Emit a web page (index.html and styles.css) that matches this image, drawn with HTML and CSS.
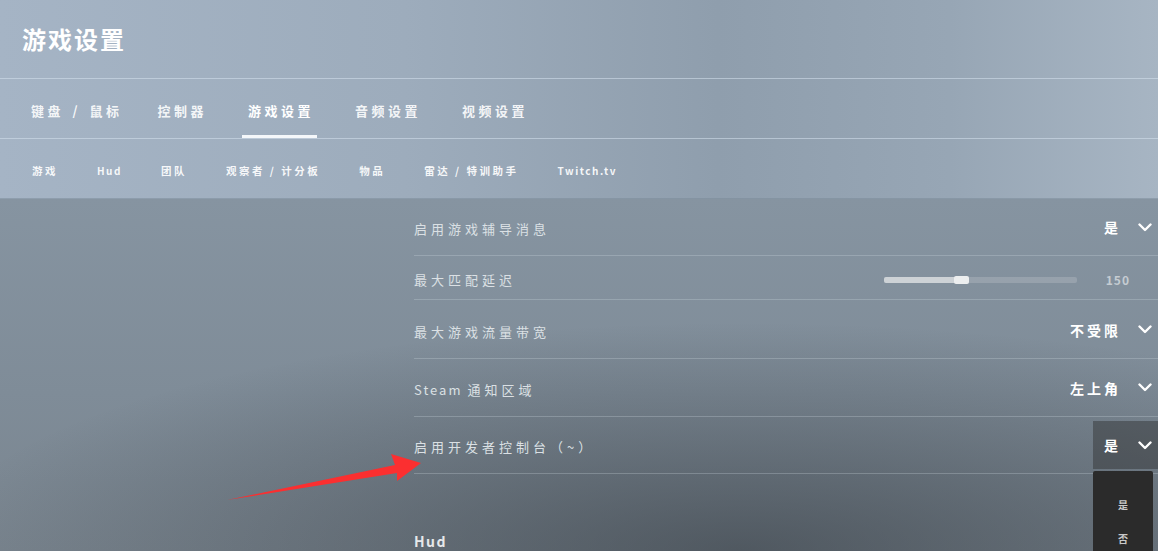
FILE: index.html
```html
<!DOCTYPE html>
<html lang="zh-CN">
<head>
    <meta charset="UTF-8">
    <meta name="viewport" content="width=device-width, initial-scale=1.0">
    <title>游戏设置</title>
    <link rel="stylesheet" href="styles.css">
</head>
<body>

<div class="screen">
    <header class="title-bar">
        <h1>游戏设置</h1>
    </header>

    <nav class="tabs">
        <a class="tab tab-wide">键盘 / 鼠标</a>
        <a class="tab">控制器</a>
        <a class="tab active">游戏设置</a>
        <a class="tab">音频设置</a>
        <a class="tab">视频设置</a>
    </nav>

    <nav class="subtabs">
        <a class="subtab">游戏</a>
        <a class="subtab latin">Hud</a>
        <a class="subtab">团队</a>
        <a class="subtab">观察者 / 计分板</a>
        <a class="subtab">物品</a>
        <a class="subtab">雷达 / 特训助手</a>
        <a class="subtab latin">Twitch.tv</a>
    </nav>

    <main class="content">
        <aside class="side"></aside>

        <section class="settings">
            <div class="row row-1">
                <span class="label">启用游戏辅导消息</span>
                <div class="select">
                    <span class="value">是</span>
                    <svg class="chevron" viewBox="0 0 14 9"><path d="M1.5 1.5 L7 7 L12.5 1.5"/></svg>
                </div>
            </div>

            <div class="row row-2">
                <span class="label">最大匹配延迟</span>
                <div class="slider">
                    <div class="track">
                        <div class="fill" style="width: 38%"></div>
                        <div class="handle"></div>
                    </div>
                    <span class="number">150</span>
                </div>
            </div>

            <div class="row row-3">
                <span class="label">最大游戏流量带宽</span>
                <div class="select">
                    <span class="value">不受限</span>
                    <svg class="chevron" viewBox="0 0 14 9"><path d="M1.5 1.5 L7 7 L12.5 1.5"/></svg>
                </div>
            </div>

            <div class="row row-4">
                <span class="label"><span class="latin">Steam </span>通知区域</span>
                <div class="select">
                    <span class="value">左上角</span>
                    <svg class="chevron" viewBox="0 0 14 9"><path d="M1.5 1.5 L7 7 L12.5 1.5"/></svg>
                </div>
            </div>

            <div class="row row-5">
                <span class="label">启用开发者控制台（~）</span>
                <div class="select open">
                    <span class="value">是</span>
                    <svg class="chevron" viewBox="0 0 14 9"><path d="M1.5 1.5 L7 7 L12.5 1.5"/></svg>
                    <ul class="menu">
                        <li>是</li>
                        <li>否</li>
                    </ul>
                </div>
            </div>

            <h2 class="section-title">Hud</h2>
        </section>

        <!-- annotation arrow pointing at the console option -->
        <svg class="arrow" viewBox="0 0 200 52">
            <path d="M1 50 L169 15 L165 4 L195 13 L171 31 L171 23 Z"/>
        </svg>
    </main>
</div>

</body>
</html>
```

FILE: styles.css
```css
:root {
    --text-color: #ffffff;
    --label-color: #dbe0e4;
    --line-light: rgba(214, 226, 238, 0.55);
    --line-dark: rgba(210, 220, 228, 0.28);
    --arrow-color: #fb2f30;
}
body {
    margin: 0;
    padding: 0;
    font-family: 'Noto Sans CJK SC', 'Noto Sans', sans-serif;
    color: var(--text-color);
    background-color: #7d8a97;
}
.screen {
    width: 1158px;
    height: 551px;
    overflow: hidden;
    display: flex;
    flex-direction: column;
    background: linear-gradient(90deg, #a5b4c5 0%, #9dacbc 35%, #8f9ead 62%, #97a6b5 82%, #a7b5c3 100%);
}
.title-bar {
    height: 78px;
    flex-shrink: 0;
    border-bottom: 1px solid var(--line-light);
    display: flex;
    align-items: center;
    padding-left: 22px;
}
.title-bar h1 {
    margin: 0;
    font-size: 24px;
    font-weight: 700;
    letter-spacing: 2px;
    padding-bottom: 2px;
}
.tabs {
    height: 59px;
    flex-shrink: 0;
    border-bottom: 1px solid var(--line-light);
    display: flex;
    align-items: stretch;
    gap: 41px;
    padding-left: 31px;
}
.tab {
    position: relative;
    display: flex;
    align-items: center;
    font-size: 13px;
    font-weight: 700;
    letter-spacing: 3.5px;
    color: rgba(255, 255, 255, 0.9);
    padding-top: 4px;
}
.tab-wide {
    margin-right: -6px;
    word-spacing: 2px;
}
.tab.active {
    color: #ffffff;
}
.tab.active::after {
    content: '';
    position: absolute;
    left: -6px;
    right: -3px;
    bottom: 0;
    height: 3px;
    background-color: #f4f7fa;
}
.subtabs {
    height: 60px;
    flex-shrink: 0;
    display: flex;
    align-items: center;
    gap: 39px;
    padding-left: 32px;
    padding-top: 2px;
    box-sizing: border-box;
    box-shadow: inset 0 -1px 0 rgba(120, 135, 150, 0.5);
}
.subtab {
    font-size: 10.5px;
    font-weight: 700;
    letter-spacing: 2.5px;
    color: rgba(255, 255, 255, 0.92);
}
.subtab.latin {
    font-size: 10px;
    letter-spacing: 1.5px;
}
.content {
    position: relative;
    flex: 1;
    display: flex;
    background:
        radial-gradient(ellipse 70% 65% at 64% 100%, rgba(38, 44, 50, 0.5) 0%, rgba(38, 44, 50, 0) 100%),
        linear-gradient(180deg, #8694a1 0%, #7f8c98 55%, #7a858f 100%);
}
.side {
    width: 414px;
    flex-shrink: 0;
}
.settings {
    flex: 1;
    display: flex;
    flex-direction: column;
}
.row {
    display: flex;
    align-items: center;
    justify-content: space-between;
    border-bottom: 1px solid var(--line-dark);
    padding-top: 3px;
    box-sizing: border-box;
}
.row-1 { height: 57px; }
.row-2 { height: 44px; padding-top: 4px; }
.row-3 { height: 59px; padding-top: 4px; }
.row-4 { height: 58px; }
.row-5 { height: 57px; }
.label {
    font-size: 13px;
    letter-spacing: 4px;
    color: var(--label-color);
}
.label .latin {
    letter-spacing: 2px;
}
.select {
    position: relative;
    align-self: stretch;
    display: flex;
    align-items: center;
    gap: 17px;
    padding: 0 6px 0 11px;
    margin: 1px 0 4px;
}
.value {
    font-size: 14px;
    font-weight: 700;
    letter-spacing: 3px;
    color: #ffffff;
}
.chevron {
    width: 14px;
    height: 9px;
    fill: none;
    stroke: #ffffff;
    stroke-width: 2.4;
    stroke-linecap: round;
    stroke-linejoin: round;
}
.select.open {
    background-color: rgba(40, 40, 40, 0.42);
}
.menu {
    position: absolute;
    top: calc(100% + 2px);
    left: 0;
    right: 5px;
    height: 120px;
    margin: 0;
    padding: 17px 0 0;
    list-style: none;
    background-color: #2b2b2b;
    border-radius: 2px 2px 0 0;
}
.menu li {
    height: 34px;
    line-height: 34px;
    text-align: center;
    font-size: 10px;
    font-weight: 700;
    color: #c9c9c9;
}
.slider {
    display: flex;
    align-items: center;
    gap: 29px;
    padding-right: 28px;
}
.track {
    position: relative;
    width: 193px;
    height: 6px;
    background-color: rgba(255, 255, 255, 0.16);
    border-radius: 2px;
}
.fill {
    height: 100%;
    background-color: #cdd2d6;
    border-radius: 2px 0 0 2px;
}
.handle {
    position: absolute;
    left: 70px;
    top: -1px;
    width: 15px;
    height: 8px;
    background-color: #eceeef;
    border-radius: 2px;
}
.number {
    font-size: 12px;
    font-weight: 700;
    letter-spacing: 1px;
    color: #c5ccd2;
}
.section-title {
    margin: 60px 0 0;
    font-size: 14px;
    line-height: 14px;
    font-weight: 700;
    letter-spacing: 1.5px;
    color: #e6e8ea;
}
.arrow {
    position: absolute;
    left: 226px;
    top: 251px;
    width: 200px;
    height: 52px;
    fill: var(--arrow-color);
}
```
